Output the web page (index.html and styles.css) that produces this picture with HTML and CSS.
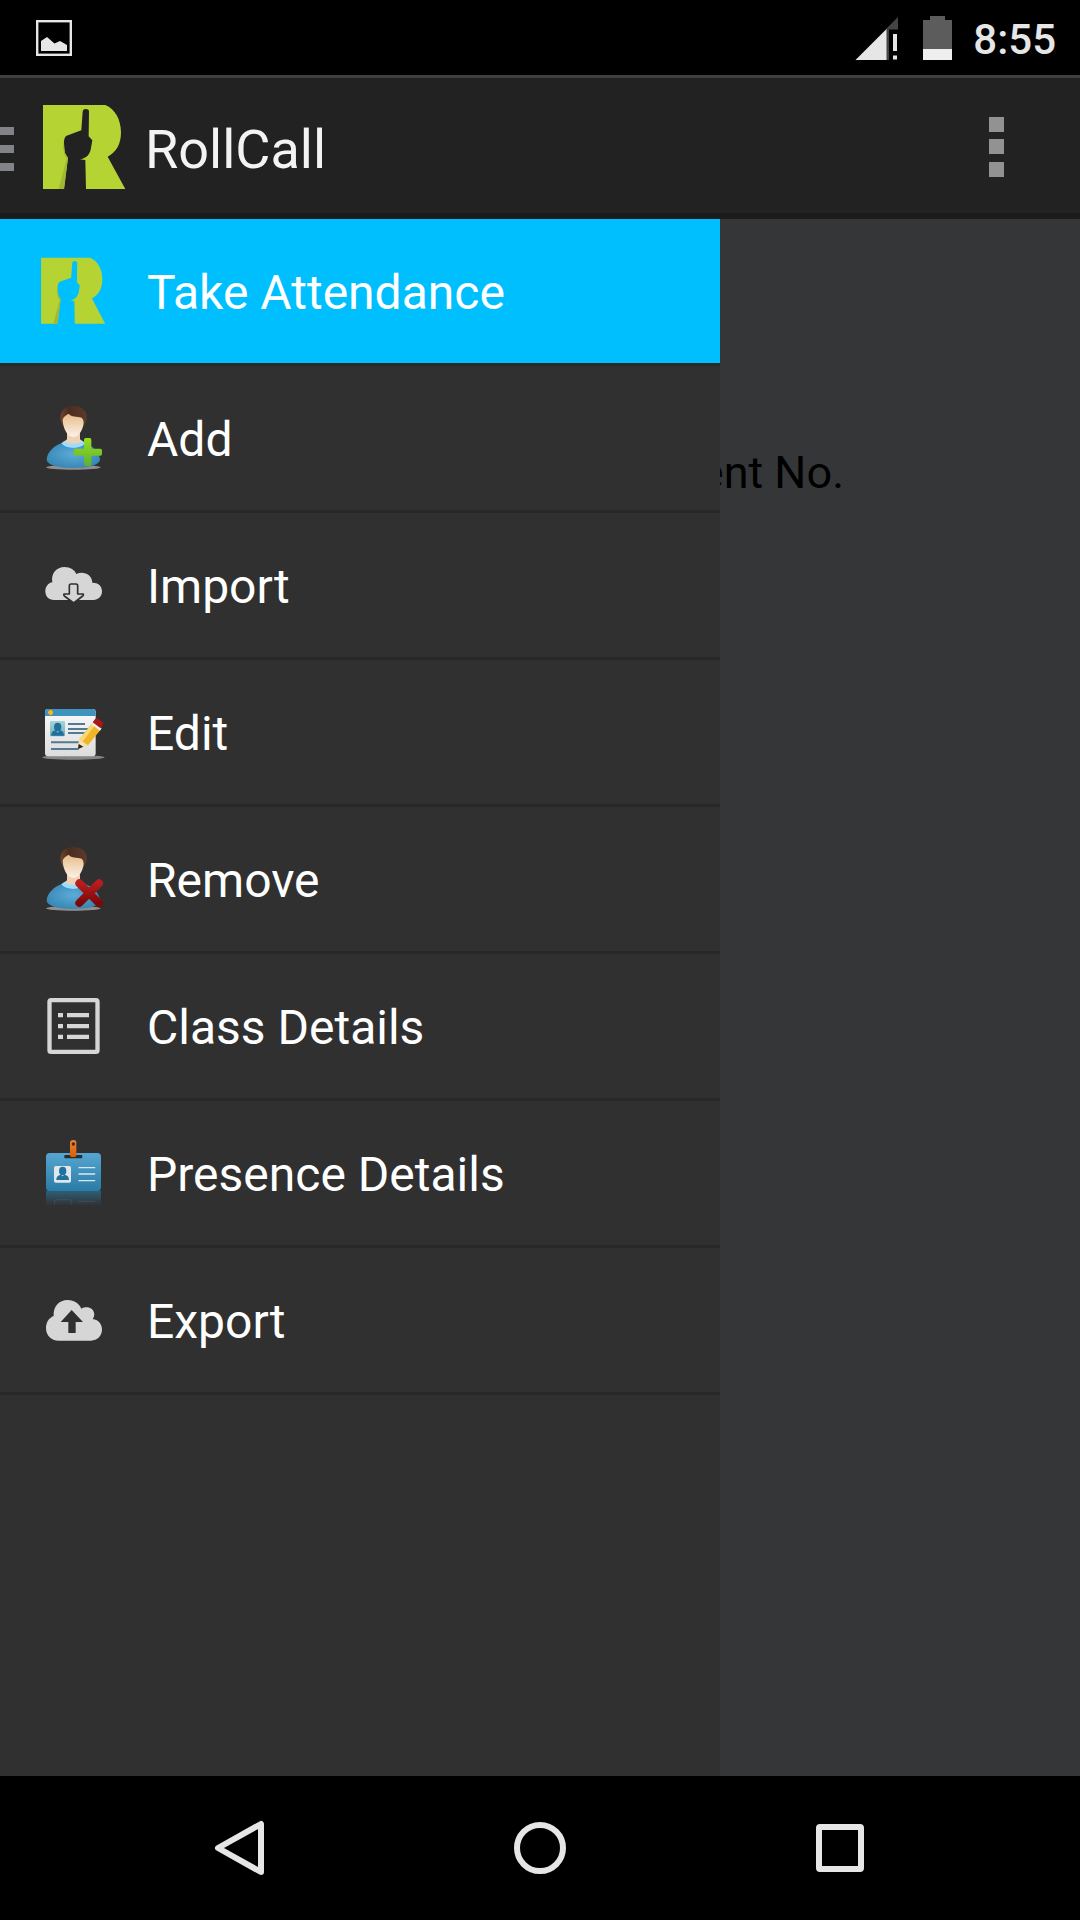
FILE: index.html
```html
<!DOCTYPE html>
<html lang="en">
<head>
<meta charset="utf-8">
<meta name="viewport" content="width=device-width, initial-scale=1">
<title>RollCall</title>
<link rel="stylesheet" href="styles.css">
</head>
<body>
<svg class="defs" width="0" height="0" aria-hidden="true">
  <defs>
    <linearGradient id="hair" x1="0" x2="1"><stop offset="0" stop-color="#70462f"/><stop offset=".3" stop-color="#4a2c20"/><stop offset="1" stop-color="#5c3a29"/></linearGradient>
    <linearGradient id="skin" x1="0" y1="0" x2="0" y2="1"><stop offset="0" stop-color="#e8bb8b"/><stop offset="1" stop-color="#fcf2e6"/></linearGradient>
    <radialGradient id="shirt" cx=".5" cy=".45" r=".6"><stop offset="0" stop-color="#5cabd8"/><stop offset="1" stop-color="#3585b2"/></radialGradient>
    <linearGradient id="plus" x1="0" y1="0" x2="0" y2="1"><stop offset="0" stop-color="#98e01c"/><stop offset="1" stop-color="#5cb033"/></linearGradient>
    <linearGradient id="cross" x1="0" y1="0" x2="0" y2="1"><stop offset="0" stop-color="#b81c1c"/><stop offset="1" stop-color="#7d0808"/></linearGradient>
    <linearGradient id="card" x1="0" y1="0" x2="0" y2="1"><stop offset="0" stop-color="#55a7d1"/><stop offset="1" stop-color="#2a7ba5"/></linearGradient>
    <linearGradient id="paper" x1="0" y1="0" x2="0" y2="1"><stop offset="0" stop-color="#fafafa"/><stop offset="1" stop-color="#dcdcdc"/></linearGradient>
    <linearGradient id="photo" x1="0" y1="0" x2="0" y2="1"><stop offset="0" stop-color="#a5d5d8"/><stop offset="1" stop-color="#6fb0ba"/></linearGradient>
    <linearGradient id="mirror" x1="0" y1="0" x2="0" y2="1"><stop offset="0" stop-color="#2d6079"/><stop offset="1" stop-color="#2d6079" stop-opacity="0"/></linearGradient>
    <linearGradient id="clip" x1="0" y1="0" x2="0" y2="1"><stop offset="0" stop-color="#e8853a"/><stop offset="1" stop-color="#e05c00"/></linearGradient>
    <symbol id="logo" viewBox="108 297 288 288">
      <path fill="#b5d333" fill-rule="evenodd" d="M129 315H316C346 327 363 360 363 397C363 432 349 457 323 470L376 567H258L256 480L240 478C262 474 270 462 273 444L277 421L266 409L267 334Q266 327 257 327Q249 327 248 335L244 391L200 407Q193 411 192 424V446L196 466L204 473L192 567H129Z"/>
      <path fill="#9dba34" d="M191 420L189 445L195 467L200 476L176 567H192L204 473L195 458Z"/>
    </symbol>
    <symbol id="person" viewBox="51 66 216 216">
      <ellipse cx="160" cy="262" rx="82" ry="7" fill="#8f8f8f"/>
      <path fill="#efd2b5" d="M141 160H180V178L194 188L160 204L128 188L141 178Z"/>
      <path fill="url(#shirt)" d="M126 188C100 198 80 218 80 240C82 255 115 264 160 264S238 255 240 240C240 218 220 198 194 188L160 204Z"/>
      <path fill="#9bdcff" d="M134 182C141 194 180 194 187 182L196 190C182 208 138 208 124 190Z"/>
      <path fill="url(#hair)" d="M130 138C120 125 119 107 125 96C132 83 145 78 162 78C182 79 196 89 200 103C202 117 198 130 190 139Z"/>
      <path fill="url(#skin)" d="M128 120Q129 109 146 101C155 112 170 108 185 113Q191 117 191 128C189 152 174 171 160 171C144 170 130 151 128 120Z"/>
    </symbol>
  </defs>
</svg>

<header class="status-bar">
  <svg class="status-picture" viewBox="36 20 36 36" aria-label="Screenshot saved"><rect x="37.2" y="21.2" width="33.6" height="33.6" fill="none" stroke="#e6e6e6" stroke-width="2.4"/><path fill="#e6e6e6" d="M41 41L47 37L54.500 43.500L60 41L67 45V51H41Z"/></svg>
  <svg class="status-signal" viewBox="855 15 43 44" aria-label="Mobile signal"><path fill="#444" d="M898 16V28.500H889V59H886V28Z"/><path fill="#e6e6e6" d="M855.500 59L886.500 28V59ZM893 33H897V50H893ZM893 54.500H897V58.500H893Z"/></svg>
  <svg class="status-battery" viewBox="923 15 29 44" aria-label="Battery low"><path fill="#5c5c5c" d="M930 15H945V19H952V48H923V19H930Z"/><path fill="#eee" d="M923 48H952V59H923Z"/></svg>
  <time class="clock">8:55</time>
</header>

<header class="app-bar">
  <button class="menu-button" aria-label="Close navigation drawer"><svg viewBox="0 127 14 45"><path fill="#828387" d="M0 127H14V135H0ZM0 145H14V153H0ZM0 163H14V171H0Z"/></svg></button>
  <svg class="app-logo" aria-hidden="true"><use href="#logo"/></svg>
  <h1 class="app-title">RollCall</h1>
  <button class="overflow-button" aria-label="More options"><svg viewBox="0 0 15 60"><path fill="#929292" d="M0 0H15V15H0ZM0 22H15V37H0ZM0 45H15V60H0Z"/></svg></button>
</header>

<div class="screen">
  <main class="content">
    <p class="field-name">Student No.</p>
  </main>
  <nav class="drawer" aria-label="Main">
    <ul class="drawer-list">
      <li><a class="drawer-item selected" href="#attendance" aria-current="page">
        <svg class="item-icon" viewBox="111 120 216 216"><g transform="translate(22 -119) scale(.785)"><path fill="#b5d333" d="M129 315H316C346 327 363 360 363 397C363 432 349 457 323 470L374 567H258L256 480L240 478C262 474 270 462 273 444L277 421L266 409L267 334Q266 327 257 327Q249 327 248 335L244 391L200 407Q193 411 192 424V446L196 466L204 473L192 567H129Z"/><path fill="#9dba34" d="M191 420L189 445L195 467L200 476L176 567H192L204 473L195 458Z"/></g></svg>
        <span class="item-label">Take Attendance</span></a></li>
      <li><a class="drawer-item" href="#add">
        <svg class="item-icon" viewBox="51 66 216 216"><use href="#person" x="51" y="66" width="216" height="216"/><path fill="url(#plus)" d="M197 174H209Q214 174 214 179V206H241Q246 206 246 211V222Q246 227 241 227H214V253Q214 258 209 258H197Q192 258 192 253V227H166Q161 227 161 222V211Q161 206 166 206H192V179Q192 174 197 174Z"/></svg>
        <span class="item-label">Add</span></a></li>
      <li><a class="drawer-item" href="#import">
        <svg class="item-icon" viewBox="51 57 216 216"><path fill="#d6d6d6" d="M102 210C86 210 76 199 76 184C76 169 85 159 97 157C92 130 110 111 133 111C151 111 165 121 169 132C190 122 216 133 217 158C235 158 246 168 246 184C246 200 235 210 220 210Z"/><path fill="#d6d6d6" stroke="#303030" stroke-width="5" stroke-linejoin="round" d="M148 167Q148 162 153 162H168Q173 162 173 167V192H190Q191 196 188 198L161 219L133 198Q130 195 132 192H148Z"/></svg>
        <span class="item-label">Import</span></a></li>
      <li><a class="drawer-item" href="#edit">
        <svg class="item-icon" viewBox="51 498 216 216"><ellipse cx="160" cy="682" rx="94" ry="7" fill="#858585"/><rect x="75" y="537" width="152" height="142" rx="9" fill="url(#paper)"/><path fill="#3f93bf" d="M75 558V546Q75 537 84 537H218Q227 537 227 546V558Z"/><path fill="#ffb515" d="M88 540H96V544H99V551H96V555H88V551H84V544H88Z"/><rect x="90" y="573" width="45" height="46" rx="3" fill="url(#photo)"/><path fill="#236f9c" d="M94 617C94 606 99 603 107 601L113 609L119 601C127 603 132 606 132 617Z"/><ellipse cx="113" cy="591" rx="11" ry="13" fill="#236f9c"/><path stroke="#537993" stroke-width="6" d="M144 582H195M144 597H205M144 609H205M93 637H180M93 657H176"/><path fill="#f0b429" d="M216 580L243 598L204 646L174 657L177 629Z"/><path fill="#f7d875" d="M216 580L225 586L187 636L177 629Z"/><path fill="#f5e1b8" d="M177 628L204 646L174 657Z"/><path fill="#222" d="M176 642L190 650L174 657Z"/><path fill="#eee" d="M214 583L219 577L245 594L240 602Z"/><path fill="#a81717" d="M218 577L226 566Q229 563 234 566L247 575Q252 579 249 583L242 595Z"/></svg>
        <span class="item-label">Edit</span></a></li>
      <li><a class="drawer-item" href="#remove">
        <svg class="item-icon" viewBox="51 69 216 216"><use href="#person" x="51" y="69" width="216" height="216"/><path fill="none" stroke="url(#cross)" stroke-width="24" stroke-linecap="round" d="M178 190L237 249M237 190L178 249"/></svg>
        <span class="item-label">Remove</span></a></li>
      <li><a class="drawer-item" href="#class-details">
        <svg class="item-icon" viewBox="51 510 216 216"><rect x="88.500" y="540.500" width="144" height="155" rx="5" fill="none" stroke="#d6d6d6" stroke-width="13"/><path fill="#d6d6d6" d="M114 579H129V592H114ZM141 579H207V592H141ZM114 612H129V625H114ZM141 612H207V625H141ZM114 644H129V657H114ZM141 644H207V657H141Z"/></svg>
        <span class="item-label">Class Details</span></a></li>
      <li><a class="drawer-item" href="#presence-details">
        <svg class="item-icon" viewBox="51 51 216 216"><rect x="78" y="212" width="165" height="46" fill="url(#mirror)"/><path d="M104 254V243Q104 239 108 239H149Q153 239 153 243V254M176 244H225" fill="none" stroke="#4b5960" stroke-opacity=".6" stroke-width="3"/><rect x="78" y="99" width="165" height="114" rx="11" fill="url(#card)"/><rect x="133" y="105" width="54" height="10" rx="3" fill="#282c30"/><path fill="url(#clip)" d="M150 70Q150 60 160 60T169 70V106Q169 111 164 111H155Q150 111 150 106Z"/><circle cx="160" cy="72" r="5" fill="#3b2a20"/><rect x="102" y="138" width="51" height="50" rx="5" fill="#e0e6ea"/><ellipse cx="128" cy="153" rx="11" ry="13" fill="#1f719e"/><path fill="#1f719e" d="M109 180C109 168 115 166 123 164L128 169L133 164C141 166 147 168 147 180Z"/><path stroke="#d8e9f2" stroke-width="4" stroke-linecap="round" d="M177 143H224M177 162H224M177 182H224"/></svg>
        <span class="item-label">Presence Details</span></a></li>
      <li><a class="drawer-item" href="#export">
        <svg class="item-icon" viewBox="51 492 216 216"><path fill="#d6d6d6" fill-rule="evenodd" d="M116 662C93 662 78 646 78 624C78 606 87 594 101 588C99 560 117 540 143 540C163 540 178 551 184 566C199 557 222 562 223 583Q223 591 218 597C234 599 246 611 246 628C246 648 232 662 213 662ZM155 570L122 606H145V639H167V606H189Z"/></svg>
        <span class="item-label">Export</span></a></li>
    </ul>
  </nav>
</div>

<footer class="system-nav">
  <button aria-label="Back"><svg viewBox="-30 -30 60 60"><path d="M-22 0L21 -24V24Z"/></svg></button>
  <button aria-label="Home"><svg viewBox="-30 -30 60 60"><circle r="23"/></svg></button>
  <button aria-label="Recent apps"><svg viewBox="-30 -30 60 60"><rect x="-21" y="-21" width="42" height="42" rx="1"/></svg></button>
</footer>
</body>
</html>
```

FILE: styles.css
```css
* {
  box-sizing: border-box;
}

body {
  margin: 0;
  min-height: 100vh;
  display: flex;
  flex-direction: column;
  background: #000;
  color: #fff;
  font-family: Roboto, "Noto Sans", sans-serif;
}

button {
  padding: 0;
  border: 0;
  background: none;
}

svg {
  display: block;
  flex: none;
}

.defs {
  position: absolute;
}

.status-bar {
  display: flex;
  align-items: center;
  height: 75px;
  padding: 0 24px 0 36px;
}

.status-picture {
  width: 36px;
  height: 36px;
}

.status-signal {
  width: 43px;
  height: 44px;
  margin-left: auto;
}

.status-battery {
  width: 29px;
  height: 44px;
  margin: 0 21px 0 25px;
}

.clock {
  padding-top: 4px;
  color: #e6e6e6;
  font-size: 42px;
  font-weight: 500;
}

.app-bar {
  display: flex;
  align-items: center;
  height: 144px;
  background: #222;
  box-shadow: inset 0 3px #3f3f3f, inset 0 -6px #1b1b1b;
}

.menu-button {
  padding-top: 4px;
}

.menu-button svg {
  width: 14px;
  height: 45px;
}

.app-logo {
  width: 96px;
  height: 96px;
  margin: 0 13px 0 22px;
}

.app-title {
  margin: 0;
  padding-top: 4px;
  color: #f3f3f3;
  font-size: 54px;
  font-weight: 400;
}

.overflow-button {
  margin-left: auto;
  padding: 0 76px;
}

.overflow-button svg {
  width: 15px;
  height: 60px;
}

.screen {
  position: relative;
  flex: 1;
  display: flex;
  background: #353638;
}

.content {
  flex: 1;
  padding: 227px 236px 0 0;
}

.field-name {
  margin: 0;
  color: #000;
  font-size: 45px;
  line-height: 54px;
  text-align: right;
}

.drawer {
  position: absolute;
  inset: 0 auto 0 0;
  width: 720px;
  max-width: 100%;
  background: #303030;
}

.drawer-list {
  margin: 0;
  padding: 0;
  list-style: none;
}

.drawer-list li {
  border-bottom: 3px solid #282828;
}

.drawer-item {
  display: flex;
  align-items: center;
  gap: 38px;
  height: 144px;
  padding-left: 37px;
  color: #fff;
  font-size: 48px;
  text-decoration: none;
}

.drawer-item.selected {
  background: #00bfff;
}

.item-icon {
  width: 72px;
  height: 72px;
}

.item-label {
  padding-top: 2px;
}

.system-nav {
  display: flex;
  height: 144px;
  padding: 0 90px;
}

.system-nav button {
  flex: 1;
  display: flex;
  align-items: center;
  justify-content: center;
}

.system-nav svg {
  width: 60px;
  height: 60px;
  fill: none;
  stroke: #e6e6e6;
  stroke-width: 6px;
  stroke-linejoin: round;
}
```
